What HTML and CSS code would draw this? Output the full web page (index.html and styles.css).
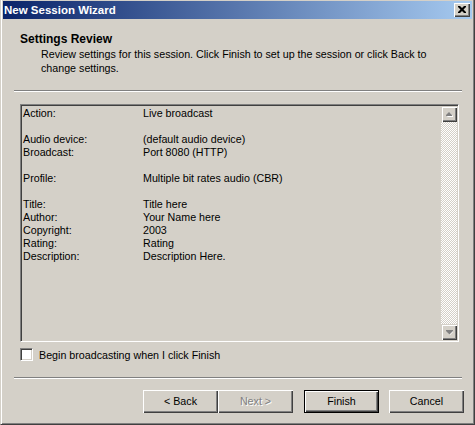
FILE: index.html
```html
<!DOCTYPE html>
<html>
<head>
<meta charset="utf-8">
<link rel="stylesheet" href="styles.css">
</head>
<body>
<div class="window">
  <div class="titlebar">
    <span class="title">New Session Wizard</span>
    <span class="close">
      <svg width="8" height="7" viewBox="0 0 8 7"><path d="M0 0h2l2 2 2-2h2v1l-2.5 2.5 2.5 2.5v1h-2l-2-2-2 2h-2v-1l2.5-2.5-2.5-2.5z" fill="#000"/></svg>
    </span>
  </div>
  <div class="header">
    <div class="heading">Settings Review</div>
    <div class="subtitle">Review settings for this session. Click Finish to set up the session or click Back to change settings.</div>
  </div>
  <div class="sep sep-top"></div>
  <div class="listbox">
    <div class="list">
      <div class="row"><span>Action:</span><span>Live broadcast</span></div>
      <div class="row blank"></div>
      <div class="row"><span>Audio device:</span><span>(default audio device)</span></div>
      <div class="row"><span>Broadcast:</span><span>Port 8080 (HTTP)</span></div>
      <div class="row blank"></div>
      <div class="row"><span>Profile:</span><span>Multiple bit rates audio (CBR)</span></div>
      <div class="row blank"></div>
      <div class="row"><span>Title:</span><span>Title here</span></div>
      <div class="row"><span>Author:</span><span>Your Name here</span></div>
      <div class="row"><span>Copyright:</span><span>2003</span></div>
      <div class="row"><span>Rating:</span><span>Rating</span></div>
      <div class="row"><span>Description:</span><span>Description Here.</span></div>
    </div>
    <div class="scrollbar">
      <div class="sbtn">
        <svg width="7" height="5" viewBox="0 0 7 5"><path d="M4 1l3 3v1H1z" fill="#fff"/><path d="M3 0l3 3v1H0V3z" fill="#808080"/></svg>
      </div>
      <div class="track"></div>
      <div class="sbtn">
        <svg width="7" height="5" viewBox="0 0 7 5"><path d="M1 1h6v1l-3 3z" fill="#fff"/><path d="M0 0h7v1l-3.5 3.5L0 1z" fill="#808080"/></svg>
      </div>
    </div>
  </div>
  <label class="check-row">
    <span class="checkbox"></span>
    <span>Begin broadcasting when I click Finish</span>
  </label>
  <div class="sep sep-bottom"></div>
  <div class="buttons">
    <div class="btn">&lt; Back</div>
    <div class="btn disabled">Next &gt;</div>
    <div class="btn default gap-finish"><span class="inner">Finish</span></div>
    <div class="btn gap-cancel">Cancel</div>
  </div>
</div>
</body>
</html>
```
FILE: styles.css
```css
html, body {
  margin: 0;
  padding: 0;
  background: #d4d0c8;
}
body {
  font-family: "Liberation Sans", Arial, sans-serif;
  font-size: 10.7px;
  color: #000;
}
.window {
  width: 475px;
  height: 425px;
  box-sizing: border-box;
  background: #d4d0c8;
  border-left: 1px solid #d4d0c8;
  border-right: 1px solid #404040;
  border-bottom: 1px solid #404040;
  box-shadow: inset 1px 0 #fff, inset -1px -1px #808080;
  padding: 1px 2px 2px 2px;
  display: flex;
  flex-direction: column;
}
.titlebar {
  height: 18px;
  background: linear-gradient(to right, #0a246a, #a6caf0);
  display: flex;
  align-items: center;
  justify-content: space-between;
  padding: 0 2px 0 1px;
}
.title {
  color: #fff;
  font-weight: bold;
  font-size: 11.5px;
  line-height: 18px;
}
.close {
  width: 16px;
  height: 14px;
  box-sizing: border-box;
  background: #d4d0c8;
  box-shadow: inset 1px 1px #fff, inset -1px -1px #404040, inset -2px -2px #808080;
  display: flex;
  align-items: center;
  justify-content: center;
  padding: 0 1px 1px 0;
}
.header {
  padding: 13px 0 0 17px;
}
.heading {
  font-weight: bold;
  font-size: 12px;
  line-height: 14px;
}
.subtitle {
  margin: 1px 0 0 21px;
  line-height: 14px;
  width: 400px;
}
.sep {
  height: 2px;
  box-sizing: border-box;
  border-top: 1px solid #808080;
  border-bottom: 1px solid #fff;
  margin-left: 11px;
  width: 448px;
}
.sep-top {
  margin-top: 15px;
}
.listbox {
  margin: 12px 0 0 17px;
  width: 439px;
  height: 238px;
  box-sizing: border-box;
  border: 1px solid;
  border-color: #808080 #fff #fff #808080;
  box-shadow: inset 1px 1px #404040, inset -1px -1px #d4d0c8;
  padding: 1px;
  display: flex;
}
.list {
  flex: 1;
  padding: 1px 0 0 1px;
}
.row {
  display: grid;
  grid-template-columns: 120px 1fr;
  height: 13px;
  line-height: 13px;
}
.scrollbar {
  width: 16px;
  display: flex;
  flex-direction: column;
}
.sbtn {
  width: 16px;
  height: 16px;
  box-sizing: border-box;
  background: #d4d0c8;
  box-shadow: inset 1px 1px #d4d0c8, inset 2px 2px #fff, inset -1px -1px #404040, inset -2px -2px #808080;
  display: flex;
  align-items: center;
  justify-content: center;
}
.track {
  flex: 1;
  background: repeating-conic-gradient(#fff 0 25%, #d4d0c8 0 50%) 0 0 / 2px 2px;
}
.check-row {
  margin: 5px 0 0 17px;
  height: 15px;
  display: flex;
  align-items: center;
  gap: 6px;
}
.checkbox {
  width: 13px;
  height: 13px;
  box-sizing: border-box;
  background: #fff;
  border: 1px solid;
  border-color: #808080 #fff #fff #808080;
  box-shadow: inset 1px 1px #404040, inset -1px -1px #d4d0c8;
}
.sep-bottom {
  margin-top: 15px;
}
.buttons {
  margin: 11px 0 0 140px;
  display: flex;
}
.btn {
  width: 75px;
  height: 23px;
  box-sizing: border-box;
  background: #d4d0c8;
  box-shadow: inset 1px 1px #fff, inset -1px -1px #404040, inset -2px -2px #808080;
  display: flex;
  align-items: center;
  justify-content: center;
  padding-bottom: 1px;
}
.btn.disabled {
  color: #808080;
  text-shadow: 1px 1px #fff;
}
.btn.default {
  box-shadow: none;
  border: 1px solid #000;
  padding: 0;
}
.btn.default .inner {
  flex: 1;
  align-self: stretch;
  display: flex;
  align-items: center;
  justify-content: center;
  box-shadow: inset 1px 1px #fff, inset -1px -1px #404040, inset -2px -2px #808080;
  padding-bottom: 1px;
}
.gap-finish {
  margin-left: 11px;
}
.gap-cancel {
  margin-left: 10px;
}
```
